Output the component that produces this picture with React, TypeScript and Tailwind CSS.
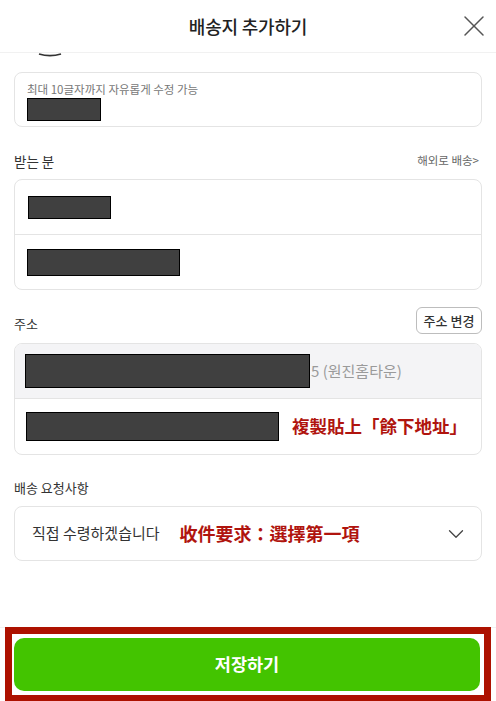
import { X, ChevronDown } from "lucide-react";

function Redacted({ className }: { className: string }) {
  return <div className={`bg-[#404040] border border-black ${className}`} />;
}

export default function App() {
  return (
    <div
      className="h-[701px] w-[496px] bg-white flex flex-col overflow-hidden text-[#222]"
      style={{ fontFamily: '"Noto Sans CJK KR", "Noto Sans", sans-serif' }}
    >
      {/* header */}
      <header className="h-[53px] shrink-0 grid grid-cols-[1fr_auto_1fr] items-center border-b border-[#f1f1f1]">
        <div />
        <h1 className="text-[18px] font-medium tracking-[-0.2px] text-[#222]">배송지 추가하기</h1>
        <div className="flex justify-end pr-[4px]">
          <X size={36} strokeWidth={1} className="text-[#555]" />
        </div>
      </header>

      <main className="flex-1 px-[14px]">
        {/* bottom of scrolled-away element */}
        <svg width="24" height="4" viewBox="0 0 24 4" className="block ml-[24px]">
          <path d="M1 1 Q12 4.2 23 1" fill="none" stroke="#333" strokeWidth="1.8" />
        </svg>

        <div className="mt-[15px] h-[55px] rounded-[8px] border border-[#e4e4e4] px-[12px] pt-[9px]">
          <p className="text-[11.5px] leading-[15px] text-[#777]">최대 10글자까지 자유롭게 수정 가능</p>
          <Redacted className="mt-[1px] w-[74px] h-[23px]" />
        </div>

        <div className="mt-[24px] flex items-center justify-between h-[20px]">
          <span className="text-[13.5px] text-[#333]">받는 분</span>
          <span className="text-[11.5px] text-[#666] pr-[3px]">해외로 배송&gt;</span>
        </div>

        <div className="mt-[8px] rounded-[8px] border border-[#e4e4e4]">
          <div className="h-[55px] flex items-center pl-[13px] border-b border-[#e4e4e4]">
            <Redacted className="w-[83px] h-[23px]" />
          </div>
          <div className="h-[54px] flex items-center pl-[12px]">
            <Redacted className="w-[153px] h-[27px]" />
          </div>
        </div>

        <div className="mt-[17px] flex items-end justify-between">
          <span className="text-[13px] text-[#333] mb-[1px]">주소</span>
          <button className="w-[66px] h-[27px] rounded-[6px] border border-[#bdbdbd] text-[13px] font-medium text-[#333]">
            주소 변경
          </button>
        </div>

        <div className="mt-[9px] rounded-[8px] border border-[#e4e4e4] overflow-hidden">
          <div className="h-[55px] bg-[#f4f4f6] flex items-center pl-[10px] border-b border-[#e4e4e4]">
            <Redacted className="w-[285px] h-[34px]" />
            <span className="ml-[1px] text-[15px] text-[#9a9a9a]">5 (원진홈타운)</span>
          </div>
          <div className="h-[55px] flex items-center pl-[11px]">
            <Redacted className="w-[253px] h-[29px]" />
            <span className="ml-[13px] text-[17.5px] font-bold text-[#b0140e]">複製貼上「餘下地址」</span>
          </div>
        </div>

        <div className="mt-[23px] text-[13px] text-[#333] leading-[20px]">배송 요청사항</div>

        <div className="mt-[8px] h-[55px] rounded-[8px] border border-[#e4e4e4] flex items-center pl-[17px] pr-[12px]">
          <span className="text-[15px] text-[#333]">직접 수령하겠습니다</span>
          <span className="ml-[20px] text-[18px] font-bold text-[#b0140e]">收件要求：選擇第一項</span>
          <ChevronDown size={26} strokeWidth={1.2} className="ml-auto text-[#444]" />
        </div>
      </main>

      {/* footer */}
      <footer className="shrink-0 h-[74px] border-t border-[#f1f1f1]">
        <div className="mx-[5px] -mt-px h-[75px] border-[7px] border-[#ad1100] pl-[2px] pr-[4px] pt-[4px]">
          <button className="w-full h-[53px] rounded-[10px] bg-[#43c400] text-white text-[17.5px] font-bold">
            저장하기
          </button>
        </div>
      </footer>
    </div>
  );
}
